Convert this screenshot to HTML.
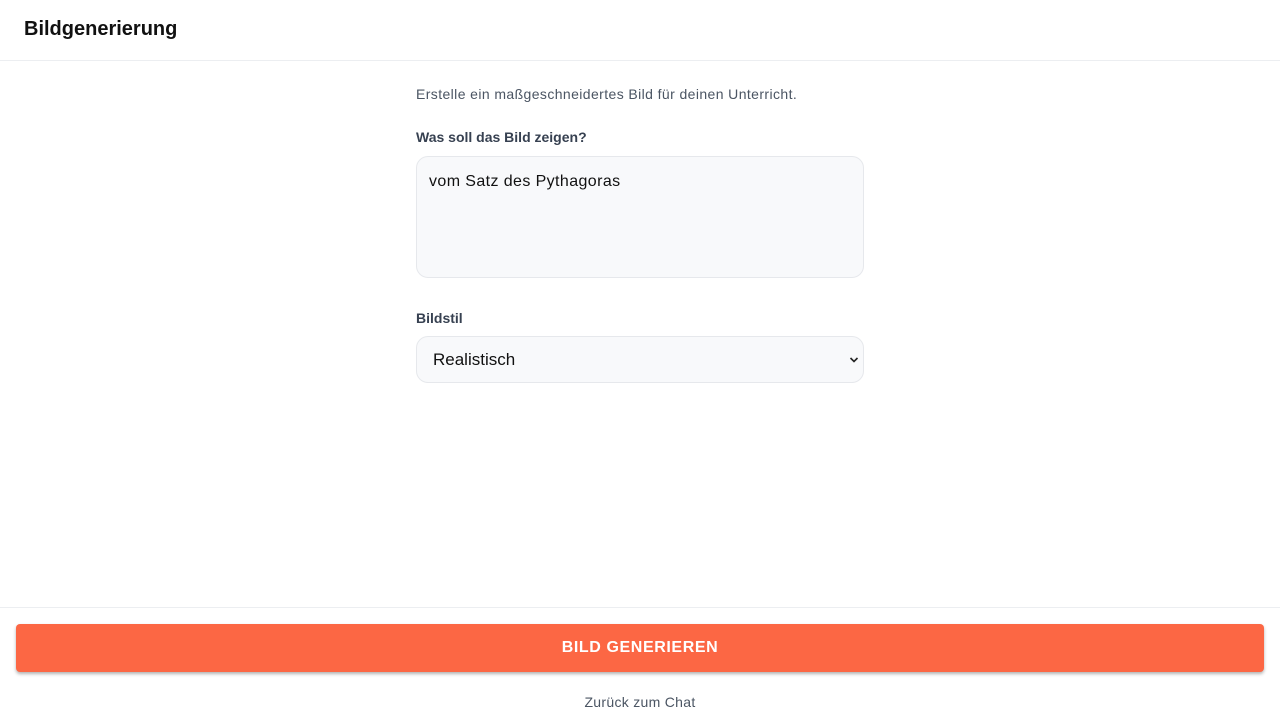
<!DOCTYPE html>
<html><head><meta charset="utf-8"><style>
*{box-sizing:border-box;margin:0;padding:0}
body{width:1280px;height:720px;background:#fff;font-family:"Liberation Sans",sans-serif;position:relative;overflow:hidden}
.hdr{position:absolute;left:0;top:0;width:1280px;height:61px;border-bottom:1px solid #eceef1}
.hdr h1{position:absolute;left:24px;top:18px;font-size:20px;font-weight:bold;color:#111}
.t{position:absolute;color:#4b5563;font-size:14px}
.lbl{position:absolute;color:#374151;font-size:14px;font-weight:bold}
.box{position:absolute;left:416px;width:448px;background:#f8f9fb;border:1px solid #e6e8ec;border-radius:12px}
.foot{position:absolute;left:0;top:607px;width:1280px;border-top:1px solid #eceef1}
.btn{position:absolute;left:16px;top:624px;width:1248px;height:48px;background:#fc6744;border-radius:4px;box-shadow:0 2px 3px rgba(0,0,0,.3);color:#fff;font-weight:bold;font-size:16px;letter-spacing:.6px;text-align:center;line-height:48px}
</style></head><body>
<div class="hdr"><h1>Bildgenerierung</h1></div>
<div class="t" style="left:416px;top:86px;letter-spacing:0.4px">Erstelle ein maßgeschneidertes Bild für deinen Unterricht.</div>
<div class="lbl" style="left:416px;top:129px">Was soll das Bild zeigen?</div>
<div class="box" style="top:156px;height:122px"><div style="position:absolute;left:12px;top:16px;font-size:16px;color:#111;letter-spacing:0.4px">vom Satz des Pythagoras</div></div>
<div class="lbl" style="left:416px;top:310px">Bildstil</div>
<div class="box" style="top:336px;height:47px"><div style="position:absolute;left:16px;top:13px;font-size:17px;color:#111">Realistisch</div>
<svg style="position:absolute;right:4px;top:19px" width="10" height="8" viewBox="0 0 10 8"><path d="M1.5 2 L5 5.5 L8.5 2" stroke="#222" stroke-width="1.6" fill="none"/></svg></div>
<div class="foot"></div>
<div class="btn">BILD GENERIEREN</div>
<div class="t" style="left:0;width:1280px;text-align:center;top:694px;letter-spacing:0.3px">Zurück zum Chat</div>
</body></html>
